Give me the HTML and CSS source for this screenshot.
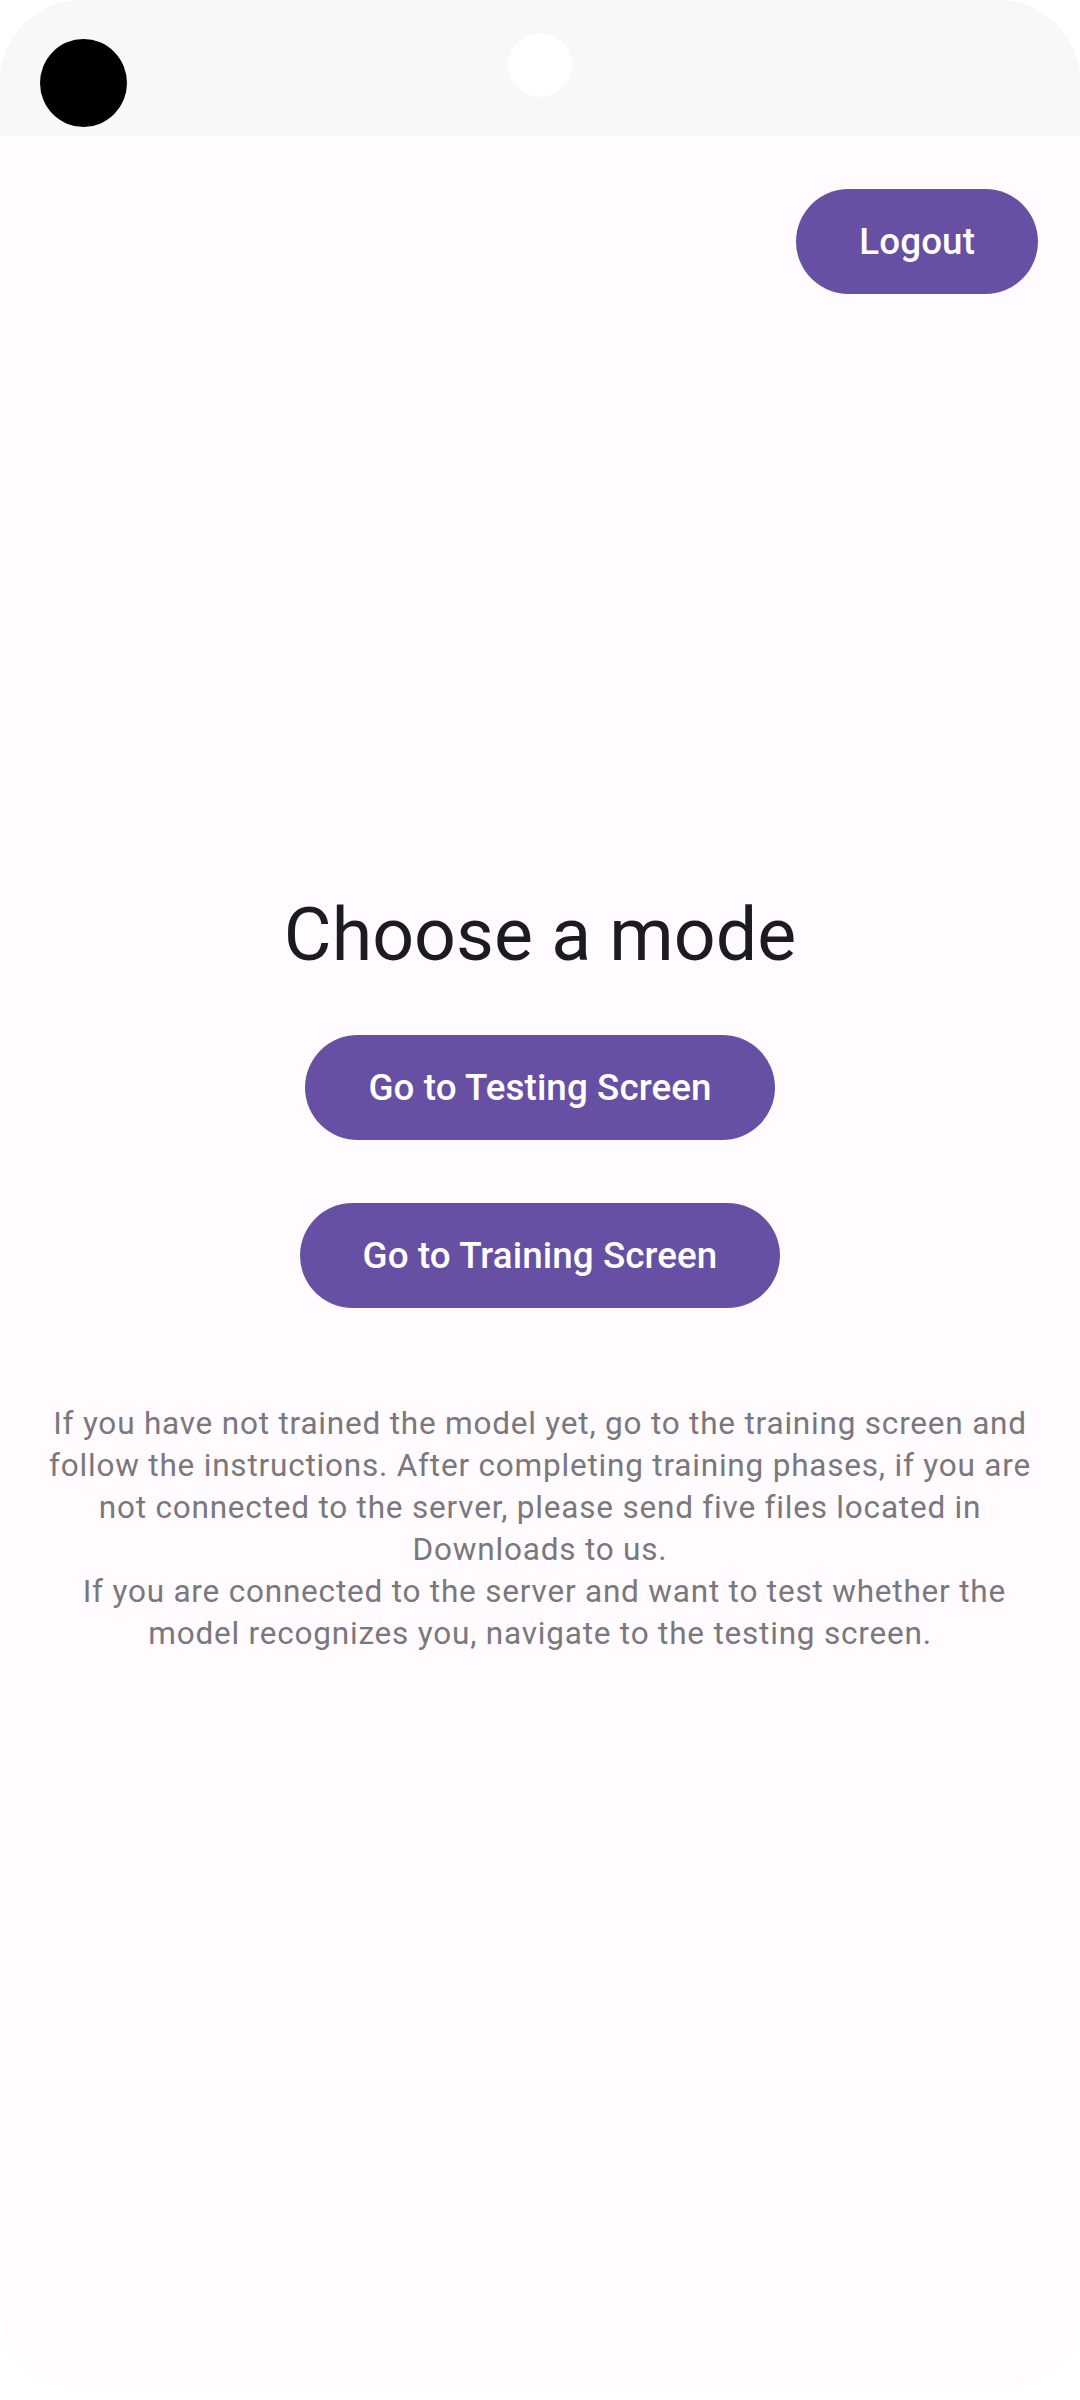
FILE: index.html
```html
<!DOCTYPE html>
<html lang="en">
<head>
<meta charset="utf-8">
<title>Choose a mode</title>
<link rel="stylesheet" href="styles.css">
</head>
<body>
<div class="screen">
  <div class="statusbar">
    <span class="cam-dot"></span>
    <span class="pill-dot"></span>
  </div>
  <div class="topbar">
    <button class="btn">Logout</button>
  </div>
  <main class="content">
    <h1 class="title">Choose a mode</h1>
    <button class="btn btn-first">Go to Testing Screen</button>
    <button class="btn btn-second">Go to Training Screen</button>
    <p class="info">If you have not trained the model yet, go to the training screen and follow the instructions. After completing training phases, if you are not connected to the server, please send five files located in Downloads to us.<br>&nbsp;If you are connected to the server and want to test whether the model recognizes you, navigate to the testing screen.</p>
  </main>
</div>
</body>
</html>
```
FILE: styles.css
```css
html, body {
  margin: 0;
  padding: 0;
  background: #ffffff;
}
body {
  font-family: Roboto, "Noto Sans", sans-serif;
}
.screen {
  width: 1080px;
  height: 2385px;
  border-radius: 82px;
  overflow: hidden;
  background: #fffbfe;
  display: flex;
  flex-direction: column;
}
.statusbar {
  height: 136px;
  flex: none;
  background: #f8f8f8;
  display: flex;
  align-items: flex-start;
  padding-left: 40px;
}
.cam-dot {
  width: 87px;
  height: 88px;
  margin-top: 39px;
  border-radius: 50%;
  background: #000;
}
.pill-dot {
  width: 64px;
  height: 64px;
  margin-top: 33px;
  margin-left: 381px;
  border-radius: 50%;
  background: #ffffff;
}
.topbar {
  display: flex;
  justify-content: flex-end;
  padding: 53px 42px 0 0;
}
.btn {
  height: 105px;
  padding: 0 63px;
  border: none;
  border-radius: 53px;
  background: #6750a4;
  color: #ffffff;
  font-family: Roboto, "Noto Sans", sans-serif;
  font-weight: 500;
  font-size: 36.75px;
  letter-spacing: 0.1px;
  line-height: 105px;
}
.content {
  display: flex;
  flex-direction: column;
  align-items: center;
  padding-top: 594px;
}
.title {
  margin: 0;
  font-weight: 400;
  font-size: 73.5px;
  line-height: 94.5px;
  color: #1c1b1f;
}
.btn-first {
  margin-top: 52px;
}
.btn-second {
  margin-top: 63px;
}
.info {
  margin: 95px 0 0;
  padding: 0 42px;
  font-size: 31.5px;
  line-height: 42px;
  letter-spacing: 0.8px;
  color: #7a777d;
  text-align: center;
}
```
